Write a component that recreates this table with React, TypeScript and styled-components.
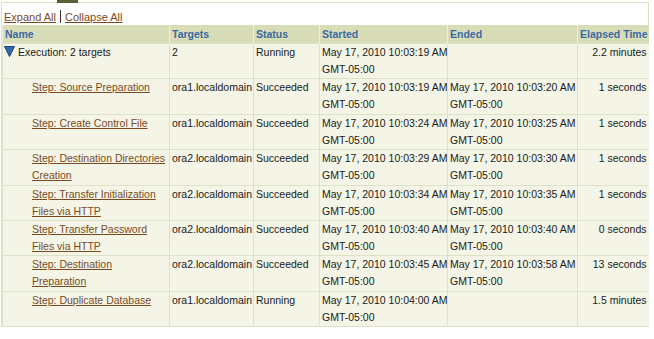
import styled, { createGlobalStyle } from 'styled-components';

const GlobalStyle = createGlobalStyle`
  body {
    margin: 0;
    background: #ffffff;
    font-family: 'Liberation Sans', Arial, sans-serif;
    font-size: 11px;
    color: #1a1a1a;
  }
`;

const Panel = styled.div`
  position: relative;
  width: 648px;
  margin: 2px 0 0 1px;
  border: 1px solid #dde2c6;
  box-sizing: border-box;
`;

const Tab = styled.div`
  position: absolute;
  top: -3px;
  left: 55px;
  width: 21px;
  height: 3px;
  background: #5a5f36;
`;

const Toolbar = styled.div`
  display: flex;
  align-items: center;
  gap: 4px;
  height: 22px;
  padding: 5px 0 0 2px;
  box-sizing: border-box;
`;

const ToolLink = styled.a`
  color: #7a4a1e;
  text-decoration: underline;
  cursor: pointer;
`;

const Divider = styled.span`
  width: 1px;
  height: 13px;
  background: #333;
`;

const Table = styled.table`
  width: 100%;
  border-collapse: collapse;
  table-layout: fixed;
  font-size: 10.5px;
`;

const Col = styled.col<{ $w: number }>`
  width: ${(p) => p.$w}px;
`;

const HeadCell = styled.th<{ $align?: string }>`
  height: 18px;
  padding: 0 2px;
  background: #d8ddb8;
  color: #3b6aa3;
  font-weight: bold;
  text-align: ${(p) => p.$align || 'left'};
  border-left: 1px solid #eef0dc;
  white-space: nowrap;
  overflow: hidden;
`;

const Row = styled.tr`
  background: #f4f5e6;
  border-top: 1px solid #dde2c6;
`;

const Cell = styled.td<{ $align?: string }>`
  height: 34.4px;
  padding: 0 2px;
  vertical-align: top;
  line-height: 17px;
  text-align: ${(p) => p.$align || 'left'};
  border-left: 1px solid #dde2c6;
  white-space: nowrap;
  overflow: hidden;
`;

const NameCell = styled(Cell)<{ $step?: boolean }>`
  padding-left: ${(p) => (p.$step ? 29 : 1)}px;
  white-space: normal;
`;

const StepLink = styled.a`
  color: #7a4a1e;
  text-decoration: underline;
  cursor: pointer;
`;

const Toggle = styled.svg`
  vertical-align: -1px;
  margin-right: 3px;
`;

type Step = {
  name: string;
  target: string;
  status: string;
  started: string;
  ended: string;
  elapsed: string;
};

const steps: Step[] = [
  { name: 'Step: Source Preparation', target: 'ora1.localdomain', status: 'Succeeded', started: '10:03:19', ended: '10:03:20', elapsed: '1 seconds' },
  { name: 'Step: Create Control File', target: 'ora1.localdomain', status: 'Succeeded', started: '10:03:24', ended: '10:03:25', elapsed: '1 seconds' },
  { name: 'Step: Destination Directories Creation', target: 'ora2.localdomain', status: 'Succeeded', started: '10:03:29', ended: '10:03:30', elapsed: '1 seconds' },
  { name: 'Step: Transfer Initialization Files via HTTP', target: 'ora2.localdomain', status: 'Succeeded', started: '10:03:34', ended: '10:03:35', elapsed: '1 seconds' },
  { name: 'Step: Transfer Password Files via HTTP', target: 'ora2.localdomain', status: 'Succeeded', started: '10:03:40', ended: '10:03:40', elapsed: '0 seconds' },
  { name: 'Step: Destination Preparation', target: 'ora2.localdomain', status: 'Succeeded', started: '10:03:45', ended: '10:03:58', elapsed: '13 seconds' },
  { name: 'Step: Duplicate Database', target: 'ora1.localdomain', status: 'Running', started: '10:04:00', ended: '', elapsed: '1.5 minutes' },
];

const Stamp = ({ time }: { time: string }) =>
  time ? (
    <>
      May 17, 2010 {time} AM
      <br />
      GMT-05:00
    </>
  ) : null;

const App = () => {
  return (
    <>
      <GlobalStyle />
      <Panel>
        <Tab />
        <Toolbar>
          <ToolLink>Expand All</ToolLink>
          <Divider />
          <ToolLink>Collapse All</ToolLink>
        </Toolbar>
        <Table>
          <colgroup>
            <Col $w={167} />
            <Col $w={84} />
            <Col $w={66} />
            <Col $w={128} />
            <Col $w={130} />
            <Col $w={71} />
          </colgroup>
          <thead>
            <tr>
              <HeadCell>Name</HeadCell>
              <HeadCell>Targets</HeadCell>
              <HeadCell>Status</HeadCell>
              <HeadCell>Started</HeadCell>
              <HeadCell>Ended</HeadCell>
              <HeadCell $align="right">Elapsed Time</HeadCell>
            </tr>
          </thead>
          <tbody>
            <Row>
              <NameCell>
                <Toggle width="11" height="11" viewBox="0 0 11 11">
                  <path d="M0.5 0.5 H10.5 L5.5 10.5 Z" fill="#3466b0" stroke="#1d3f7a" strokeWidth="1" />
                </Toggle>
                Execution: 2 targets
              </NameCell>
              <Cell>2</Cell>
              <Cell>Running</Cell>
              <Cell>
                <Stamp time="10:03:19" />
              </Cell>
              <Cell />
              <Cell $align="right">2.2 minutes</Cell>
            </Row>
            {steps.map((s) => (
              <Row key={s.name}>
                <NameCell $step>
                  <StepLink>{s.name}</StepLink>
                </NameCell>
                <Cell>{s.target}</Cell>
                <Cell>{s.status}</Cell>
                <Cell>
                  <Stamp time={s.started} />
                </Cell>
                <Cell>
                  <Stamp time={s.ended} />
                </Cell>
                <Cell $align="right">{s.elapsed}</Cell>
              </Row>
            ))}
          </tbody>
        </Table>
      </Panel>
    </>
  );
};

export default App;
